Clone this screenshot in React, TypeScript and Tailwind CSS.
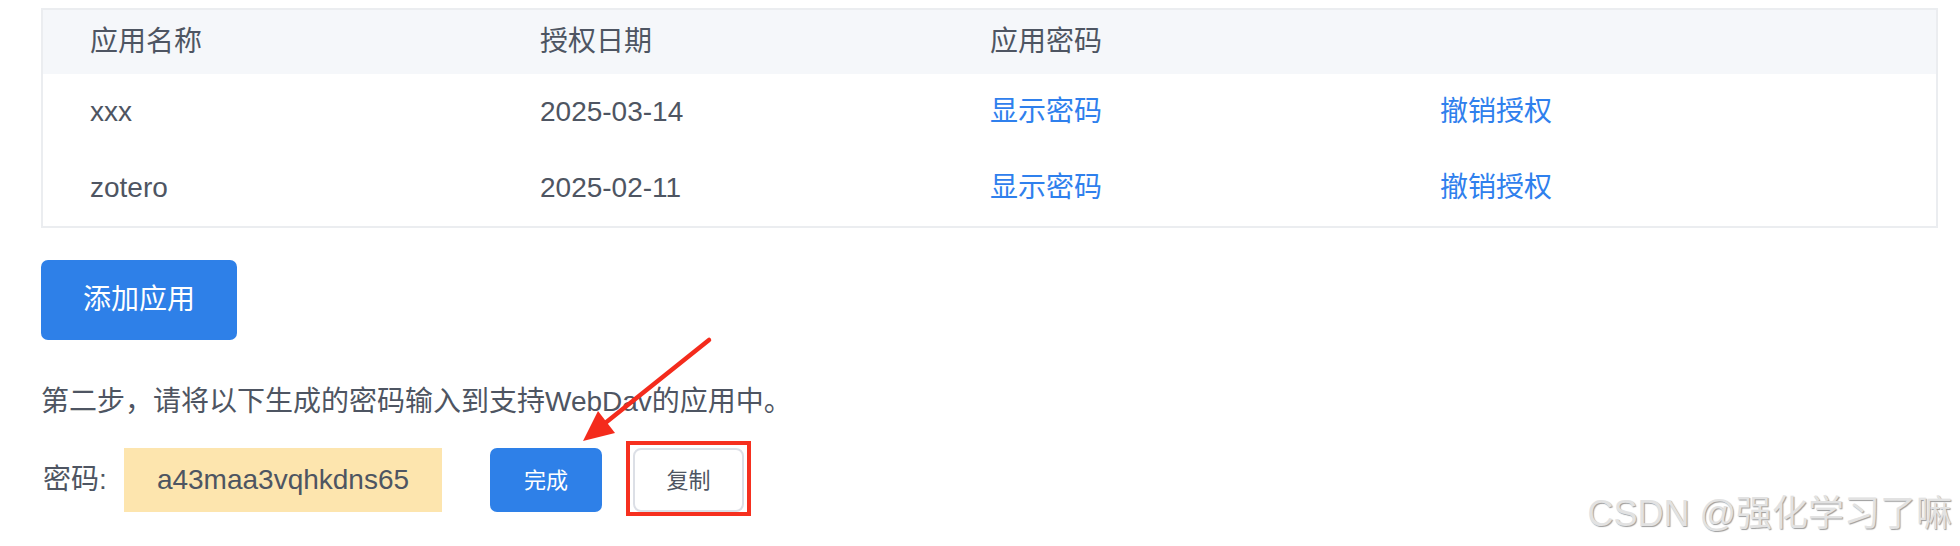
import React from 'react';

const rows = [
  { name: 'xxx', date: '2025-03-14' },
  { name: 'zotero', date: '2025-02-11' },
];

const font = 'font-["Liberation_Sans","Noto_Sans_CJK_SC",sans-serif]';

// Red annotation arrow pointing at the "完成" button
function Arrow() {
  return (
    <svg
      className="absolute left-0 top-0 pointer-events-none"
      width={1960}
      height={546}
      viewBox="0 0 1960 546"
    >
      <line x1={709} y1={340} x2={604} y2={424} stroke="#f42b1c" strokeWidth={4.5} strokeLinecap="round" />
      <polygon points="583,441 598,411 615,433" fill="#f42b1c" />
    </svg>
  );
}

export default function App() {
  return (
    <div className={`relative w-[1960px] h-[546px] bg-white overflow-hidden ${font}`}>
      <div className="flex flex-col pt-[8px] pl-[41px] pr-[22px]">
        {/* Authorised apps table */}
        <div className="border-2 border-[#ebedf0] text-[28px] text-[#4e5562]">
          <div className="flex items-center h-[64px] bg-[#f5f7fa] pl-[47px]">
            <div className="w-[450px]">应用名称</div>
            <div className="w-[450px]">授权日期</div>
            <div className="w-[450px]">应用密码</div>
            <div className="flex-1" />
          </div>
          {rows.map(r => (
            <div key={r.name} className="flex items-center h-[76px] pl-[47px]">
              <div className="w-[450px]">{r.name}</div>
              <div className="w-[450px]">{r.date}</div>
              <div className="w-[450px] text-[#2f80ed] cursor-pointer">显示密码</div>
              <div className="flex-1 text-[#2f80ed] cursor-pointer">撤销授权</div>
            </div>
          ))}
        </div>

        <div className="mt-[32px]">
          <button className="w-[196px] h-[80px] rounded-[7px] bg-[#2e80e8] text-white text-[28px]">
            添加应用
          </button>
        </div>

        <p className="mt-[42px] text-[28px] leading-[40px] text-[#4e5562]">
          第二步，请将以下生成的密码输入到支持WebDav的应用中。
        </p>

        <div className="flex items-center mt-[26px] h-[64px]">
          <div className="w-[83px] pl-[2px] text-[28px] text-[#4e5562]">密码:</div>
          <div className="w-[318px] h-[64px] flex items-center justify-center bg-[#fde5ae] text-[28px] text-[#4e5562]">
            a43maa3vqhkdns65
          </div>
          <button className="ml-[48px] w-[112px] h-[64px] rounded-[7px] bg-[#2e80e8] text-white text-[22px]">
            完成
          </button>
          <div className="relative ml-[31px]">
            <button className="w-[111px] h-[64px] rounded-[8px] bg-white border-2 border-[#dcdfe6] text-[22px] text-[#4e5562]">
              复制
            </button>
            <span className="absolute -left-[7px] -right-[7px] -top-[7px] -bottom-[4px] border-[4px] border-[#f6301f] pointer-events-none" />
          </div>
        </div>
      </div>

      <Arrow />

      <div className="absolute right-[8px] top-[494px] text-[36px] leading-[40px] text-[#e2e2e2] [text-shadow:1px_1px_1px_#9c9c9c]">
        CSDN @强化学习了嘛
      </div>
    </div>
  );
}
